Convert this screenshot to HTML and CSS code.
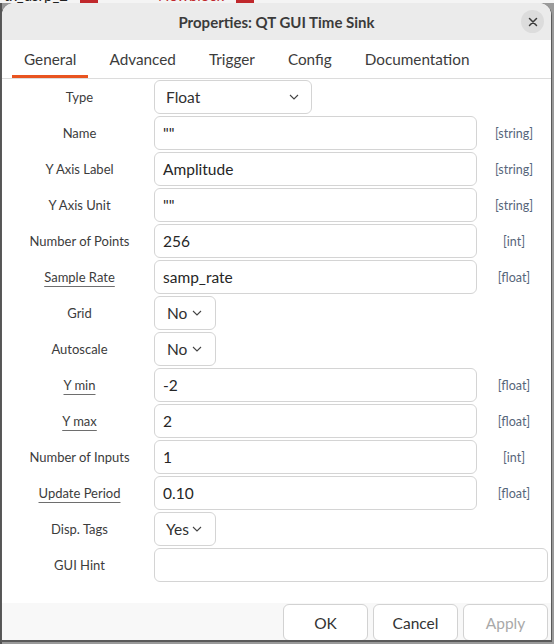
FILE: index.html
```html
<!DOCTYPE html>
<html>
<head>
<meta charset="utf-8">
<link rel="stylesheet" href="styles.css">
</head>
<body>
<div class="desktop">
  <div class="topstrip">
    <span class="bgtab">tx_usrp_2 <span class="badge"></span></span>
    <span class="bgtab red">Newblock <span class="badge"></span></span>
  </div>
  <div class="dialog">
    <div class="titlebar">
      <div></div>
      <div class="title">Properties: QT GUI Time Sink</div>
      <div class="closewrap"><div class="close">
        <svg width="10" height="10" viewBox="0 0 10 10"><path d="M1.5 1.5 L8.5 8.5 M8.5 1.5 L1.5 8.5" stroke="#3a3a3a" stroke-width="1.5" stroke-linecap="round"/></svg>
      </div></div>
    </div>
    <div class="tabs">
      <div class="tab active">General</div>
      <div class="tab">Advanced</div>
      <div class="tab">Trigger</div>
      <div class="tab">Config</div>
      <div class="tab">Documentation</div>
    </div>
    <div class="form">
      <div class="label">Type</div>
      <div class="cell"><div class="combo wide"><span>Float</span><svg class="chev" width="10" height="6" viewBox="0 0 10 6"><path d="M1 1 L5 5 L9 1" fill="none" stroke="#444" stroke-width="1.1"/></svg></div></div>
      <div></div>

      <div class="label">Name</div>
      <div class="input">""</div>
      <div class="hint">[string]</div>

      <div class="label">Y Axis Label</div>
      <div class="input">Amplitude</div>
      <div class="hint">[string]</div>

      <div class="label">Y Axis Unit</div>
      <div class="input">""</div>
      <div class="hint">[string]</div>

      <div class="label">Number of Points</div>
      <div class="input">256</div>
      <div class="hint">[int]</div>

      <div class="label"><span class="ul">Sample Rate</span></div>
      <div class="input">samp_rate</div>
      <div class="hint">[float]</div>

      <div class="label">Grid</div>
      <div class="cell"><div class="combo small"><span>No</span><svg class="chev" width="10" height="6" viewBox="0 0 10 6"><path d="M1 1 L5 5 L9 1" fill="none" stroke="#444" stroke-width="1.1"/></svg></div></div>
      <div></div>

      <div class="label">Autoscale</div>
      <div class="cell"><div class="combo small"><span>No</span><svg class="chev" width="10" height="6" viewBox="0 0 10 6"><path d="M1 1 L5 5 L9 1" fill="none" stroke="#444" stroke-width="1.1"/></svg></div></div>
      <div></div>

      <div class="label"><span class="ul">Y min</span></div>
      <div class="input">-2</div>
      <div class="hint">[float]</div>

      <div class="label"><span class="ul">Y max</span></div>
      <div class="input">2</div>
      <div class="hint">[float]</div>

      <div class="label">Number of Inputs</div>
      <div class="input">1</div>
      <div class="hint">[int]</div>

      <div class="label"><span class="ul">Update Period</span></div>
      <div class="input">0.10</div>
      <div class="hint">[float]</div>

      <div class="label">Disp. Tags</div>
      <div class="cell"><div class="combo small yes"><span>Yes</span><svg class="chev" width="10" height="6" viewBox="0 0 10 6"><path d="M1 1 L5 5 L9 1" fill="none" stroke="#444" stroke-width="1.1"/></svg></div></div>
      <div></div>

      <div class="label">GUI Hint</div>
      <div class="input span2"></div>
    </div>
    <div class="footer">
      <div class="btn">OK</div>
      <div class="btn">Cancel</div>
      <div class="btn disabled">Apply</div>
    </div>
  </div>
</div>
</body>
</html>
```
FILE: styles.css
```css
* { box-sizing: border-box; }
html, body { margin: 0; padding: 0; }
body {
  width: 554px;
  height: 644px;
  overflow: hidden;
  background: #8a8a8a;
  font-family: Lato, "Noto Sans", sans-serif;
}
.desktop {
  width: 554px;
  height: 644px;
  background: linear-gradient(to right, #555 0, #555 2px, #9a9a9a 2px);
}
.topstrip {
  height: 3px;
  overflow: hidden;
  background: #f4f4f4;
  display: flex;
  gap: 60px;
  padding-left: 4px;
}
.bgtab {
  font-size: 15px;
  line-height: 15px;
  margin-top: -12px;
  color: #222;
  display: flex;
  align-items: flex-end;
  gap: 12px;
}
.bgtab.red { color: #c0282c; }
.badge {
  display: inline-block;
  width: 18px;
  height: 15px;
  background: #c0282c;
}
.dialog {
  margin-left: 2px;
  width: 549px;
  height: 637px;
  background: #fff;
  border-radius: 12px 12px 0 0;
  overflow: hidden;
  display: flex;
  flex-direction: column;
  box-shadow: 0 1px 0 1px #5a5a5a;
}
.titlebar {
  height: 37px;
  flex: none;
  background: #ebebeb;
  display: grid;
  grid-template-columns: 1fr auto 1fr;
  align-items: center;
}
.title {
  font-weight: bold;
  font-size: 15px;
  color: #3b3b3b;
  padding-top: 1px;
}
.closewrap {
  display: flex;
  justify-content: flex-end;
  padding-right: 7px;
}
.close {
  width: 23px;
  height: 23px;
  border-radius: 50%;
  background: #dcdcdc;
  display: flex;
  align-items: center;
  justify-content: center;
}
.tabs {
  height: 39px;
  flex: none;
  border-bottom: 1px solid #dcdcdc;
  display: flex;
  gap: 9px;
  padding-left: 10px;
}
.tab {
  padding: 0 12px;
  font-size: 15.3px;
  color: #3c3c3c;
  display: flex;
  align-items: center;
  padding-top: 2px;
  border-bottom: 3px solid transparent;
}
.tab.active { border-bottom-color: #e95420; }
.form {
  display: grid;
  grid-template-columns: 149px 323px 71px;
  grid-auto-rows: 34px;
  row-gap: 2px;
  padding-left: 3px;
  padding-top: 1px;
}
.label {
  display: flex;
  align-items: center;
  justify-content: center;
  font-size: 13px;
  color: #3c3c3c;
}
.ul {
  text-decoration: underline;
  text-decoration-color: #6e6e6e;
  text-underline-offset: 4px;
}
.input {
  border: 1px solid #d4d4d4;
  border-radius: 6px;
  padding-left: 8px;
  display: flex;
  align-items: center;
  font-size: 15.5px;
  color: #262626;
}
.input.span2 { grid-column: 2 / 4; }
.hint {
  display: flex;
  align-items: center;
  justify-content: center;
  font-size: 12.5px;
  color: #56657a;
  padding-left: 3px;
}
.cell { display: flex; }
.combo {
  border: 1px solid #d4d4d4;
  border-radius: 6px;
  display: flex;
  align-items: center;
  justify-content: space-between;
  font-size: 15.5px;
  color: #303030;
}
.combo.wide { width: 158px; padding: 0 12px 0 11px; }
.combo.small { width: 62px; padding: 0 13px 0 12px; }
.combo.small.yes { padding-left: 11px; }
.chev { flex: none; }
.footer {
  margin-top: auto;
  height: 37px;
  flex: none;
  background: #f8f8f8;
  display: flex;
  justify-content: flex-end;
  gap: 5px;
  padding-right: 3px;
  padding-top: 1px;
}
.btn {
  width: 85px;
  height: 37px;
  border: 1px solid #d2d2d2;
  border-radius: 6px;
  background: #fff;
  display: flex;
  align-items: center;
  justify-content: center;
  font-size: 15.5px;
  color: #333;
}
.btn.disabled { color: #a9a9a9; }
```
